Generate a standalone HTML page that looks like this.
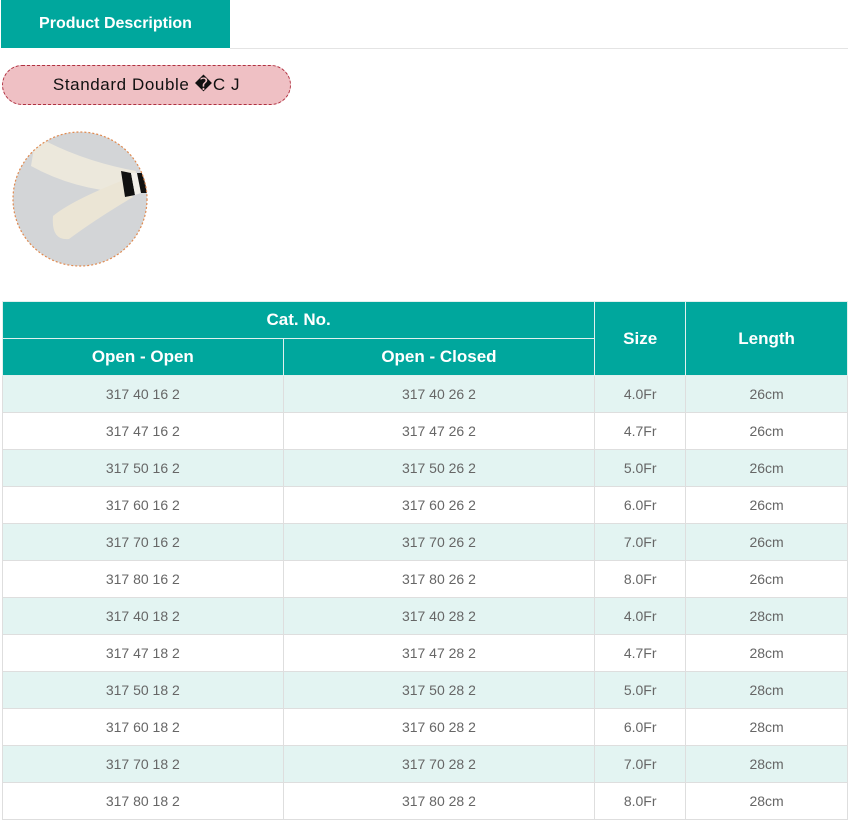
<!DOCTYPE html>
<html><head><meta charset="utf-8"><style>
body{margin:0;background:#fff;width:855px;height:821px;overflow:hidden;font-family:"Liberation Sans",sans-serif;position:relative}
.tab{position:absolute;left:1px;top:0;width:229px;height:48px;background:#00a79d;color:#fff;font-weight:bold;font-size:16px;line-height:47px;text-align:center}
.line{position:absolute;left:230px;top:48px;width:618px;height:1px;background:#e4e4e4}
.pill{position:absolute;left:2px;top:65px;width:287px;height:38px;background:#efc0c4;border:1px dashed #b03040;border-radius:20px;text-align:center;line-height:38px;font-size:17px;letter-spacing:0.6px;color:#111}
.img{position:absolute;left:11px;top:131px}
table{position:absolute;left:2px;top:301px;border-collapse:collapse;width:846px;font-family:"Liberation Sans",sans-serif}
th{background:#00a79d;color:#fff;font-size:17px;font-weight:bold;border:1px solid #e0f0ee;height:36px;padding:0}
td{border:1px solid #dedede;height:36px;padding:0;text-align:center;color:#666;font-size:14px}
tr.a td{background:#e3f4f2}
</style></head><body>
<div class="tab">Product Description</div>
<div class="line"></div>
<div class="pill">Standard Double �C J</div>
<svg class="img" width="138" height="138" viewBox="0 0 138 138">
<defs><clipPath id="c"><circle cx="69" cy="68" r="67"/></clipPath></defs>
<circle cx="69" cy="68" r="67" fill="#d3d5d7"/>
<g clip-path="url(#c)">
<path d="M25 5 Q70 30 125 40 L122 62 Q65 60 20 35 Z" fill="#ece8dc"/>
<path d="M42 85 Q60 70 110 50 L122 66 Q85 88 58 108 Q40 110 42 85 Z" fill="#ebe5d5"/>
<path d="M110 40 L120 42 L124 64 L114 66 Z" fill="#111"/>
<path d="M120 42 L126 42 L130 62 L124 64 Z" fill="#f2f0ea"/>
<path d="M126 42 L140 42 L140 62 L130 62 Z" fill="#111"/>
</g>
<circle cx="69" cy="68" r="67" fill="none" stroke="#e08a50" stroke-width="1.2" stroke-dasharray="2 2"/>
</svg>
<table>
<colgroup><col style="width:281px"><col style="width:312px"><col style="width:91px"><col style="width:162px"></colgroup>
<tr><th colspan="2">Cat. No.</th><th rowspan="2">Size</th><th rowspan="2">Length</th></tr>
<tr><th>Open - Open</th><th>Open - Closed</th></tr>
<tr class="a"><td>317 40 16 2</td><td>317 40 26 2</td><td>4.0Fr</td><td>26cm</td></tr>
<tr><td>317 47 16 2</td><td>317 47 26 2</td><td>4.7Fr</td><td>26cm</td></tr>
<tr class="a"><td>317 50 16 2</td><td>317 50 26 2</td><td>5.0Fr</td><td>26cm</td></tr>
<tr><td>317 60 16 2</td><td>317 60 26 2</td><td>6.0Fr</td><td>26cm</td></tr>
<tr class="a"><td>317 70 16 2</td><td>317 70 26 2</td><td>7.0Fr</td><td>26cm</td></tr>
<tr><td>317 80 16 2</td><td>317 80 26 2</td><td>8.0Fr</td><td>26cm</td></tr>
<tr class="a"><td>317 40 18 2</td><td>317 40 28 2</td><td>4.0Fr</td><td>28cm</td></tr>
<tr><td>317 47 18 2</td><td>317 47 28 2</td><td>4.7Fr</td><td>28cm</td></tr>
<tr class="a"><td>317 50 18 2</td><td>317 50 28 2</td><td>5.0Fr</td><td>28cm</td></tr>
<tr><td>317 60 18 2</td><td>317 60 28 2</td><td>6.0Fr</td><td>28cm</td></tr>
<tr class="a"><td>317 70 18 2</td><td>317 70 28 2</td><td>7.0Fr</td><td>28cm</td></tr>
<tr><td>317 80 18 2</td><td>317 80 28 2</td><td>8.0Fr</td><td>28cm</td></tr>
</table>
</body></html>
